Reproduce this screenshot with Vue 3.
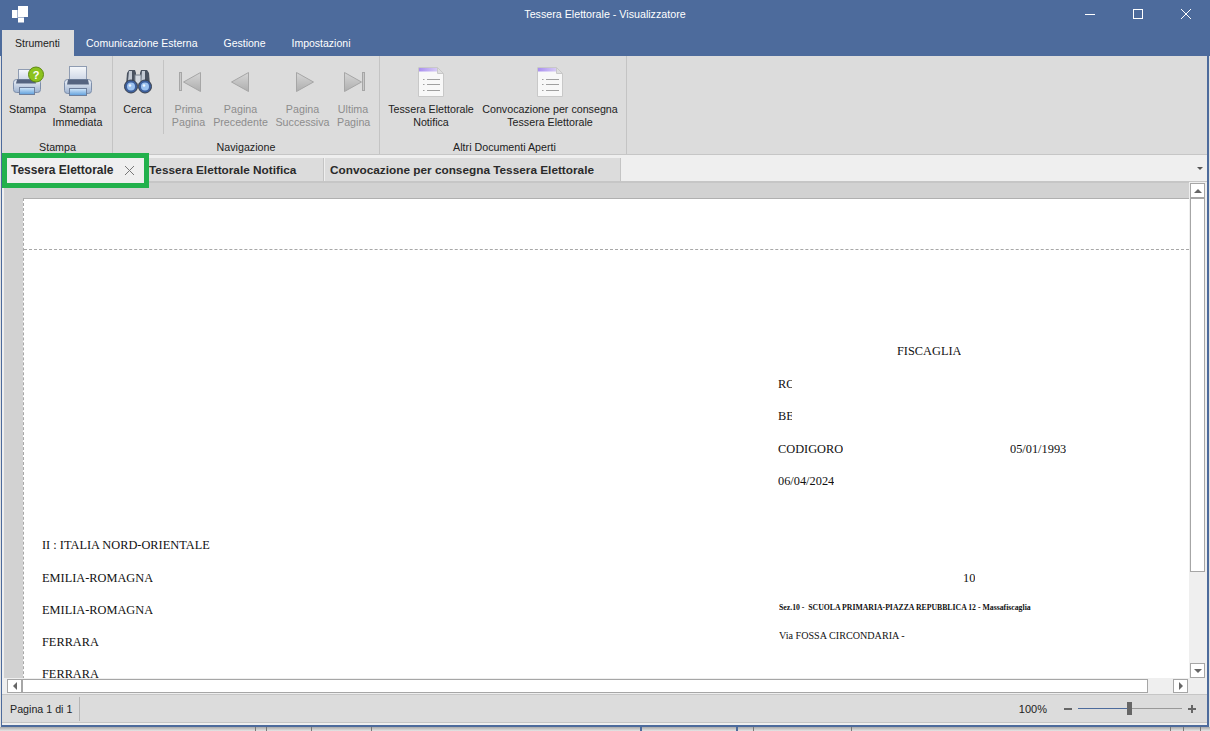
<script setup>
const menus = ['Strumenti', 'Comunicazione Esterna', 'Gestione', 'Impostazioni']

// posizione dei campi sulla pagina del report
const fields = [
  { text: 'FISCAGLIA', x: 897, y: 344 },
  { text: 'RO', x: 778, y: 377, w: 14 },
  { text: 'BE', x: 778, y: 409, w: 14 },
  { text: 'CODIGORO', x: 778, y: 442 },
  { text: '05/01/1993', x: 1010, y: 442 },
  { text: '06/04/2024', x: 778, y: 474 },
  { text: 'II : ITALIA NORD-ORIENTALE', x: 42, y: 538 },
  { text: 'EMILIA-ROMAGNA', x: 42, y: 571 },
  { text: '10', x: 963, y: 571 },
  { text: 'EMILIA-ROMAGNA', x: 42, y: 603 },
  { text: 'FERRARA', x: 42, y: 635 },
  { text: 'FERRARA', x: 42, y: 667 }
]

// righe della finestra sotto, visibili oltre il bordo
const backLines = [
  { x: 255 }, { x: 266 }, { x: 311 }, { x: 371 }, { x: 640, blue: true },
  { x: 736, blue: true }, { x: 753 }, { x: 851 }, { x: 1170 }, { x: 1183 }, { x: 1200 }
]
</script>

<template>
  <div class="desk">
    <div class="window">
      <div class="titlebar">
        <svg class="logo" width="18" height="18" viewBox="0 0 18 18">
          <rect x="0" y="5" width="5.5" height="8" fill="#fff" />
          <rect x="6" y="1" width="10" height="11" fill="#fff" />
          <rect x="6" y="12.5" width="6" height="5" fill="#fff" />
        </svg>
        <div class="title">Tessera Elettorale - Visualizzatore</div>
        <div class="winbtns">
          <svg width="12" height="12" viewBox="0 0 12 12"><path d="M1 6.5h10" stroke="#fff" fill="none" /></svg>
          <svg width="12" height="12" viewBox="0 0 12 12"><rect x="1.5" y="1.5" width="9" height="9" stroke="#fff" fill="none" /></svg>
          <svg width="12" height="12" viewBox="0 0 12 12"><path d="M1 1l10 10M11 1L1 11" stroke="#fff" fill="none" /></svg>
        </div>
      </div>

      <div class="menubar">
        <span v-for="(m, i) in menus" :key="m" class="menu" :class="{ active: i === 0 }">{{ m }}</span>
      </div>

      <div class="ribbon">
        <div class="group g-stampa">
          <div class="items">
            <div class="item" style="width:49px">
              <svg class="ico" width="34" height="34" viewBox="0 0 34 34">
                <defs>
                  <linearGradient id="body" x1="0" y1="0" x2="0" y2="1">
                    <stop offset="0" stop-color="#eef2f8" />
                    <stop offset="1" stop-color="#9db2d0" />
                  </linearGradient>
                  <linearGradient id="tray" x1="0" y1="0" x2="0" y2="1">
                    <stop offset="0" stop-color="#d5e9fa" />
                    <stop offset="1" stop-color="#5f9fdc" />
                  </linearGradient>
                  <linearGradient id="sheet" x1="0" y1="0" x2="0" y2="1">
                    <stop offset="0" stop-color="#f6f8fb" />
                    <stop offset="1" stop-color="#ccd5e5" />
                  </linearGradient>
                  <linearGradient id="tri" x1="0" y1="0" x2="0" y2="1">
                    <stop offset="0" stop-color="#d6d6d6" />
                    <stop offset="1" stop-color="#aeaeae" />
                  </linearGradient>
                  <linearGradient id="band" x1="0" y1="0" x2="1" y2="0">
                    <stop offset="0" stop-color="#a98ff0" />
                    <stop offset="1" stop-color="#dcd2f6" />
                  </linearGradient>
                </defs>
                <rect x="7.5" y="4.5" width="15" height="11" fill="url(#sheet)" stroke="#8f9cb2" />
                <rect x="2.5" y="14.5" width="27" height="13" rx="3" fill="url(#body)" stroke="#7d8eaa" />
                <path d="M6 14.5h18l1 4H5z" fill="#556480" />
                <rect x="8.5" y="22.5" width="15" height="7" fill="url(#tray)" stroke="#6d7f9c" />
                <circle cx="25" cy="9.5" r="7.5" fill="#8cc21e" stroke="#5f8a10" />
                <text x="25" y="13.5" class="qmark">?</text>
              </svg>
              <div class="lbl">Stampa</div>
            </div>
            <div class="item" style="width:51px">
              <svg class="ico" width="34" height="34" viewBox="0 0 34 34">
                <rect x="8.5" y="1.5" width="17" height="14" fill="url(#sheet)" stroke="#8f9cb2" />
                <rect x="3.5" y="14.5" width="27" height="14" rx="3" fill="url(#body)" stroke="#7d8eaa" />
                <path d="M7 14.5h20l1 5H6z" fill="#556480" />
                <rect x="8.5" y="23.5" width="17" height="7" fill="url(#tray)" stroke="#6d7f9c" />
              </svg>
              <div class="lbl">Stampa<br />Immediata</div>
            </div>
          </div>
          <div class="gname">Stampa</div>
        </div>

        <div class="group g-nav">
          <div class="items">
            <div class="item" style="width:49px">
              <svg class="ico" width="34" height="34" viewBox="0 0 34 34">
                <path d="M6 8l2-3h6l1 3v12H5z" fill="#4a5361" />
                <path d="M19 8l1-3h6l2 3 1 12H19z" fill="#4a5361" />
                <path d="M8 6h3v10H7zM21 6h3v10h-4z" fill="#c3cad4" />
                <rect x="14" y="10" width="6" height="9" fill="#d4dae2" stroke="#7a8390" />
                <circle cx="10" cy="21.5" r="6.5" fill="#3d5f9c" stroke="#39404c" />
                <circle cx="24" cy="21.5" r="6.5" fill="#3d5f9c" stroke="#39404c" />
                <circle cx="10" cy="21.5" r="4" fill="#9cc2f0" />
                <circle cx="24" cy="21.5" r="4" fill="#9cc2f0" />
                <circle cx="9" cy="20.5" r="1.3" fill="#eef5fc" />
                <circle cx="23" cy="20.5" r="1.3" fill="#eef5fc" />
              </svg>
              <div class="lbl">Cerca</div>
            </div>
            <div class="vsep"></div>
            <div class="item off" style="width:49px">
              <svg class="ico" width="34" height="34" viewBox="0 0 34 34">
                <rect x="7.5" y="7.5" width="2" height="18" fill="#c9c9c9" stroke="#a6a6a6" />
                <path d="M28.5 7.5v19L11.5 17z" fill="url(#tri)" stroke="#a6a6a6" />
              </svg>
              <div class="lbl">Prima<br />Pagina</div>
            </div>
            <div class="item off" style="width:55px">
              <svg class="ico" width="34" height="34" viewBox="0 0 34 34">
                <path d="M24.5 7.5v19L7.5 17z" fill="url(#tri)" stroke="#a6a6a6" />
              </svg>
              <div class="lbl">Pagina<br />Precedente</div>
            </div>
            <div class="item off" style="width:69px">
              <svg class="ico" width="34" height="34" viewBox="0 0 34 34">
                <path d="M10.5 7.5v19l17-9.5z" fill="url(#tri)" stroke="#a6a6a6" />
              </svg>
              <div class="lbl">Pagina<br />Successiva</div>
            </div>
            <div class="item off" style="width:32px">
              <svg class="ico nudge" width="34" height="34" viewBox="0 0 34 34">
                <path d="M8.5 7.5v19l17-9.5z" fill="url(#tri)" stroke="#a6a6a6" />
                <rect x="26.5" y="7.5" width="2" height="18" fill="#c9c9c9" stroke="#a6a6a6" />
              </svg>
              <div class="lbl">Ultima<br />Pagina</div>
            </div>
          </div>
          <div class="gname">Navigazione</div>
        </div>

        <div class="group g-docs">
          <div class="items">
            <div class="item" style="width:96px">
              <svg class="ico" width="34" height="34" viewBox="0 0 34 34">
                <path d="M4.5 2.5h19l6 6v23h-25z" fill="#f8f8f8" stroke="#c8c8c8" />
                <path d="M5 3h18l2.5 3.5H5z" fill="url(#band)" />
                <path d="M23.5 2.5l6 6h-6z" fill="#dedede" stroke="#c8c8c8" />
                <path d="M9 14.5h1.5M13 14.5h13M9 19.5h1.5M13 19.5h13M9 25.5h1.5M13 25.5h13" stroke="#a0a0a0" />
              </svg>
              <div class="lbl">Tessera Elettorale<br />Notifica</div>
            </div>
            <div class="item" style="width:142px">
              <svg class="ico" width="34" height="34" viewBox="0 0 34 34">
                <path d="M4.5 2.5h19l6 6v23h-25z" fill="#f8f8f8" stroke="#c8c8c8" />
                <path d="M5 3h18l2.5 3.5H5z" fill="url(#band)" />
                <path d="M23.5 2.5l6 6h-6z" fill="#dedede" stroke="#c8c8c8" />
                <path d="M9 14.5h1.5M13 14.5h13M9 19.5h1.5M13 19.5h13M9 25.5h1.5M13 25.5h13" stroke="#a0a0a0" />
              </svg>
              <div class="lbl">Convocazione per consegna<br />Tessera Elettorale</div>
            </div>
          </div>
          <div class="gname">Altri Documenti Aperti</div>
        </div>
      </div>

      <div class="tabs">
        <div class="tab first">
          <span>Tessera Elettorale</span>
          <svg width="11" height="11" viewBox="0 0 11 11"><path d="M1 1l9 9M10 1l-9 9" stroke="#777" fill="none" /></svg>
        </div>
        <div class="tab second">Tessera Elettorale Notifica</div>
        <div class="tab third">Convocazione per consegna Tessera Elettorale</div>
        <div class="tabfill"><i class="caret"></i></div>
      </div>

      <div class="viewer">
        <div class="viewrow">
          <div class="canvas">
            <div class="page">
              <span
                v-for="f in fields"
                :key="f.text + f.y"
                class="field"
                :style="{ left: f.x - 24 + 'px', top: f.y - 199 + 'px', width: f.w ? f.w + 'px' : 'auto' }"
              >{{ f.text }}</span>
              <span class="field tiny">Sez.10 - &nbsp;SCUOLA PRIMARIA-PIAZZA REPUBBLICA 12 - Massafiscaglia</span>
              <span class="field small">Via FOSSA CIRCONDARIA -</span>
              <div class="hline"></div>
            </div>
          </div>
          <div class="vscroll">
            <div class="sbtn"><i class="arr up"></i></div>
            <div class="vthumb"></div>
            <div class="sfill"></div>
            <div class="sbtn"><i class="arr down"></i></div>
          </div>
        </div>
        <div class="hscroll">
          <div class="sbtn"><i class="arr left"></i></div>
          <div class="hthumb"></div>
          <div class="hfill"></div>
          <div class="sbtn"><i class="arr right"></i></div>
          <div class="corner"></div>
        </div>
      </div>

      <div class="status">
        <div class="pageinfo">Pagina 1 di 1</div>
        <div class="zoomval">100%</div>
        <div class="zoomctl">
          <i class="minus"></i>
          <div class="track"><div class="done"></div><div class="knob"></div></div>
          <i class="plus"></i>
        </div>
      </div>
    </div>
    <div class="behind">
      <i
        v-for="l in backLines"
        :key="l.x"
        :class="{ blue: l.blue }"
        :style="{ left: l.x + 'px' }"
      ></i>
    </div>
  </div>
</template>

<style>
html, body { margin: 0; background: #d6d6d6; overflow: hidden; }
</style>

<style scoped>
.desk {
  width: 1210px;
  height: 731px;
  box-sizing: border-box;
  padding: 0 1px;
  overflow: hidden;
  background: #e2e2e2;
}
.window {
  height: 727px;
  box-sizing: border-box;
  border-left: 1px solid #4d6b9c;
  border-right: 2px solid #4d6b9c;
  border-bottom: 2px solid #4d6b9c;
  padding-bottom: 2px;
  background: #efefef;
  display: flex;
  flex-direction: column;
  font-family: "Liberation Sans", Arial, sans-serif;
  font-size: 10.7px;
  color: #222;
}
.titlebar {
  height: 30px;
  margin: 0 -3px 0 -2px;
  background: #4d6b9c;
  display: flex;
  align-items: center;
  position: relative;
  flex: none;
}
.logo { margin-left: 12px; margin-top: -2px; }
.title {
  position: absolute;
  left: 0;
  right: 0;
  top: 7px;
  text-align: center;
  color: #fff;
  font-size: 10.7px;
  line-height: 14px;
}
.winbtns {
  margin-left: auto;
  display: flex;
  gap: 36px;
  margin-right: 18px;
  margin-top: -2px;
}
.menubar {
  height: 26px;
  margin: 0 -3px 0 -2px;
  padding-left: 2px;
  background: #4d6b9c;
  display: flex;
  flex: none;
  font-size: 10.5px;
}
.menu {
  color: #fff;
  line-height: 27px;
  padding: 0 13px;
}
.menu.active {
  background: #dcdcdc;
  color: #222;
  width: 72px;
  box-sizing: border-box;
  padding: 0 0 0 13px;
  margin-right: -1px;
}
.ribbon {
  height: 99px;
  display: flex;
  flex: none;
  background: #dcdcdc;
  border-bottom: 1px solid #c6c6c6;
  box-sizing: border-box;
}
.group {
  display: flex;
  flex-direction: column;
  border-right: 1px solid #c4c4c4;
  box-sizing: border-box;
}
.g-stampa { width: 111px; padding-left: 1px; }
.g-nav { width: 267px; }
.g-docs { width: 247px; padding-left: 3px; }
.items { display: flex; height: 85px; }
.item {
  text-align: center;
  flex: none;
  padding-top: 9px;
  box-sizing: border-box;
}
.ico { display: block; margin: 0 auto; }
.ico.nudge { margin-left: -1px; }
.lbl {
  margin-top: 4px;
  line-height: 13px;
  white-space: nowrap;
  color: #222;
}
.off .lbl { color: #8d8d8d; }
.vsep { width: 1px; height: 74px; background: #c4c4c4; margin: 4px 0 0 1px; flex: none; }
.gname { text-align: center; line-height: 13px; }
.qmark { font: bold 11px "Liberation Sans", sans-serif; fill: #fff; text-anchor: middle; }
.tabs {
  height: 27px;
  background: #efefef;
  display: flex;
  flex: none;
  border-bottom: 1px solid #c6c6c6;
  box-sizing: border-box;
}
.tab {
  box-sizing: border-box;
  background: #dcdcdc;
  font-weight: bold;
  font-size: 11.8px;
  color: #2a2a2a;
  line-height: 24px;
  height: 23px;
  margin-top: 3px;
  border-right: 1px solid #c4c4c4;
  white-space: nowrap;
  flex: none;
}
.tab.first {
  width: 137px;
  height: 25px;
  margin-left: 5px;
  padding: 0 9px 1px 4px;
  font-size: 12px;
  background: #efefef;
  display: flex;
  align-items: center;
  justify-content: space-between;
  outline: 5px solid #22b14c;
  border-right: none;
  position: relative;
  z-index: 2;
}
.tab.second { width: 180px; padding-left: 5px; }
.tab.third { width: 296px; padding-left: 5px; margin-left: 1px; }
.tabfill { flex: 1; position: relative; }
.caret {
  position: absolute;
  right: 4px;
  top: 12px;
  border-left: 3px solid transparent;
  border-right: 3px solid transparent;
  border-top: 3px solid #555;
}
.viewer {
  height: 513px;
  display: flex;
  flex-direction: column;
  flex: none;
  background: #efefef;
  border-bottom: 1px solid #c6c6c6;
  box-sizing: border-box;
  padding: 0 1px 0 2px;
}
.viewrow { height: 496px; display: flex; flex: none; }
.canvas {
  flex: 1;
  min-width: 0;
  background: #d2d2d2;
  padding: 15px 0 0 19px;
  overflow: hidden;
  border-top: 1px solid #c6c6c6;
}
.page {
  background: #fff;
  height: 520px;
  position: relative;
  border-left: 1px dashed #a8a8a8;
  border-top: 1px solid #b0b0b0;
  overflow: hidden;
  font-family: "Liberation Serif", "Times New Roman", serif;
  font-size: 12.35px;
  color: #111;
}
.field {
  position: absolute;
  line-height: 14px;
  white-space: nowrap;
  overflow: hidden;
}
.tiny { left: 755px; top: 404px; font-size: 7.75px; font-weight: bold; line-height: 10px; }
.small { left: 755px; top: 431px; font-size: 10.15px; line-height: 12px; }
.hline { position: absolute; left: 0; right: 0; top: 50px; border-top: 1px dashed #a8a8a8; }
.vscroll {
  width: 15px;
  margin: 1px 1px 0 1px;
  display: flex;
  flex-direction: column;
  flex: none;
}
.sbtn {
  width: 15px;
  height: 15px;
  box-sizing: border-box;
  border: 1px solid #a6a6a6;
  background: #fff;
  display: flex;
  align-items: center;
  justify-content: center;
  flex: none;
}
.hscroll .sbtn { height: 14px; }
.vthumb {
  height: 374px;
  box-sizing: border-box;
  border: 1px solid #a6a6a6;
  background: #fff;
  flex: none;
}
.sfill { flex: 1; }
.arr { display: block; width: 0; height: 0; }
.arr.up { border-left: 4px solid transparent; border-right: 4px solid transparent; border-bottom: 4px solid #666; }
.arr.down { border-left: 4px solid transparent; border-right: 4px solid transparent; border-top: 4px solid #666; }
.arr.left { border-top: 4px solid transparent; border-bottom: 4px solid transparent; border-right: 4px solid #666; }
.arr.right { border-top: 4px solid transparent; border-bottom: 4px solid transparent; border-left: 4px solid #666; }
.hscroll {
  height: 16px;
  padding: 1px 0 0 3px;
  box-sizing: border-box;
  display: flex;
  align-items: flex-start;
  flex: none;
}
.hthumb {
  width: 1126px;
  height: 14px;
  box-sizing: border-box;
  border: 1px solid #a6a6a6;
  background: #fff;
  flex: none;
}
.hfill { flex: 1; }
.corner { width: 18px; flex: none; }
.status {
  height: 28px;
  box-sizing: border-box;
  display: flex;
  align-items: center;
  flex: none;
  background: #dcdcdc;
  border-bottom: 1px solid #c6c6c6;
}
.pageinfo {
  width: 78px;
  height: 24px;
  line-height: 24px;
  padding-left: 8px;
  box-sizing: border-box;
  border-right: 1px solid #b5b5b5;
}
.zoomval { margin-left: auto; margin-right: 17px; font-size: 11px; }
.zoomctl { display: flex; align-items: center; margin-right: 11px; }
.minus { display: block; width: 8px; height: 2px; background: #666; }
.track {
  width: 104px;
  height: 1px;
  background: #999;
  margin: 0 6px;
  position: relative;
}
.done { width: 50px; height: 1px; background: #4d6b9c; }
.knob {
  position: absolute;
  left: 49px;
  top: -6px;
  width: 5px;
  height: 13px;
  background: #666;
}
.plus {
  display: block;
  width: 8px;
  height: 8px;
  background:
    linear-gradient(#666, #666) center / 8px 2px no-repeat,
    linear-gradient(#666, #666) center / 2px 8px no-repeat;
}
.behind {
  height: 4px;
  margin: 0 -1px;
  position: relative;
  background: linear-gradient(#a9a9a9, #e6e6e6);
}
.behind i {
  position: absolute;
  top: 0;
  width: 1px;
  height: 4px;
  background: #777;
}
.behind i.blue { background: #4d6b9c; width: 2px; }
</style>
